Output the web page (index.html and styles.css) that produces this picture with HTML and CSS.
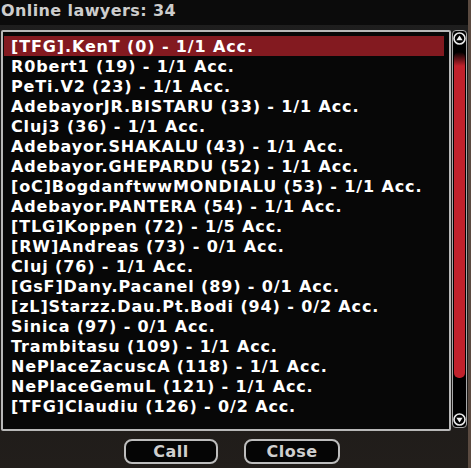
FILE: index.html
```html
<!DOCTYPE html>
<html lang="en">
<head>
    <meta charset="UTF-8">
    <meta name="viewport" content="width=device-width, initial-scale=1.0">
    <title>Online lawyers</title>
    <link rel="stylesheet" href="styles.css">
</head>
<body>
    <div class="window">
        <div class="title">Online lawyers: 34</div>
        <div class="panel">
            <ul class="list">
                <li class="selected">[TFG].KenT (0) - 1/1 Acc.</li>
                <li>R0bert1 (19) - 1/1 Acc.</li>
                <li>PeTi.V2 (23) - 1/1 Acc.</li>
                <li>AdebayorJR.BISTARU (33) - 1/1 Acc.</li>
                <li>Cluj3 (36) - 1/1 Acc.</li>
                <li>Adebayor.SHAKALU (43) - 1/1 Acc.</li>
                <li>Adebayor.GHEPARDU (52) - 1/1 Acc.</li>
                <li>[oC]BogdanftwwMONDIALU (53) - 1/1 Acc.</li>
                <li>Adebayor.PANTERA (54) - 1/1 Acc.</li>
                <li>[TLG]Koppen (72) - 1/5 Acc.</li>
                <li>[RW]Andreas (73) - 0/1 Acc.</li>
                <li>Cluj (76) - 1/1 Acc.</li>
                <li>[GsF]Dany.Pacanel (89) - 0/1 Acc.</li>
                <li>[zL]Starzz.Dau.Pt.Bodi (94) - 0/2 Acc.</li>
                <li>Sinica (97) - 0/1 Acc.</li>
                <li>Trambitasu (109) - 1/1 Acc.</li>
                <li>NePlaceZacuscA (118) - 1/1 Acc.</li>
                <li>NePlaceGemuL (121) - 1/1 Acc.</li>
                <li>[TFG]Claudiu (126) - 0/2 Acc.</li>
            </ul>
            <div class="scrollbar">
                <div class="arrow">
                    <svg width="13" height="13" viewBox="0 0 13 13"><circle cx="6.5" cy="6.5" r="5.5" fill="#000" stroke="#e8e8e8" stroke-width="1.6"/><path d="M3.4 8.3 L6.5 3.4 L9.6 8.3 Z" fill="#f0f0f0"/></svg>
                </div>
                <div class="track">
                    <div class="thumb"></div>
                </div>
                <div class="arrow">
                    <svg width="13" height="13" viewBox="0 0 13 13"><circle cx="6.5" cy="6.5" r="5.5" fill="#000" stroke="#e8e8e8" stroke-width="1.6"/><path d="M3.4 4.7 L6.5 9.6 L9.6 4.7 Z" fill="#f0f0f0"/></svg>
                </div>
            </div>
        </div>
        <div class="buttons">
            <button class="btn btn-call">Call</button>
            <button class="btn btn-close">Close</button>
        </div>
    </div>
</body>
</html>
```

FILE: styles.css
```css
body {
    margin: 0;
    padding: 0;
    background-color: #1c1a18;
    font-family: "DejaVu Sans", Verdana, sans-serif;
    font-weight: bold;
    overflow: hidden;
}

.window {
    width: 468px;
    height: 468px;
    border-right: 3px solid #5a4a40;
    background: linear-gradient(#1e1e1e, #1d1b19 80%, #221e1b);
}

.title {
    height: 25px;
    line-height: 22px;
    background-color: #0b0b0b;
    color: #cdcdcd;
    font-size: 16px;
    letter-spacing: 0.4px;
    padding-left: 1px;
}

.panel {
    display: flex;
    margin-top: 5px;
    padding-left: 1px;
}

.list {
    list-style: none;
    margin: 0;
    width: 440px;
    height: 393px;
    padding: 4px 5px 0 1px;
    border: 2px solid #b8b8b8;
    border-radius: 2px;
    background-color: #070707;
}

.list li {
    height: 20px;
    line-height: 21px;
    padding-left: 7px;
    color: #fff;
    font-size: 16px;
    letter-spacing: 0.87px;
    white-space: nowrap;
}

.list li.selected {
    background-color: #831a20;
}

.scrollbar {
    width: 13px;
    height: 396px;
    margin-left: 1px;
    border: 1px solid #a8a8a8;
    border-radius: 4px;
    background-color: #000;
    display: flex;
    flex-direction: column;
    align-items: center;
}

.arrow {
    height: 15px;
    display: flex;
    align-items: center;
}

.track {
    flex: 1;
    width: 100%;
}

.thumb {
    margin: 6px 1px 0 1px;
    height: 326px;
    border-radius: 5px;
    background: linear-gradient(#000, #c0222c 14px, #c0222c);
}

.buttons {
    display: flex;
    gap: 26px;
    padding-left: 124px;
    margin-top: 8px;
}

.btn {
    height: 25px;
    border: 2px solid #bdbdbd;
    border-radius: 8px;
    background-color: #050505;
    color: #cfcfcf;
    font-family: "DejaVu Sans", Verdana, sans-serif;
    font-weight: bold;
    font-size: 16px;
    letter-spacing: 0.5px;
    padding: 0;
}

.btn-call {
    width: 94px;
}

.btn-close {
    width: 96px;
}
```
